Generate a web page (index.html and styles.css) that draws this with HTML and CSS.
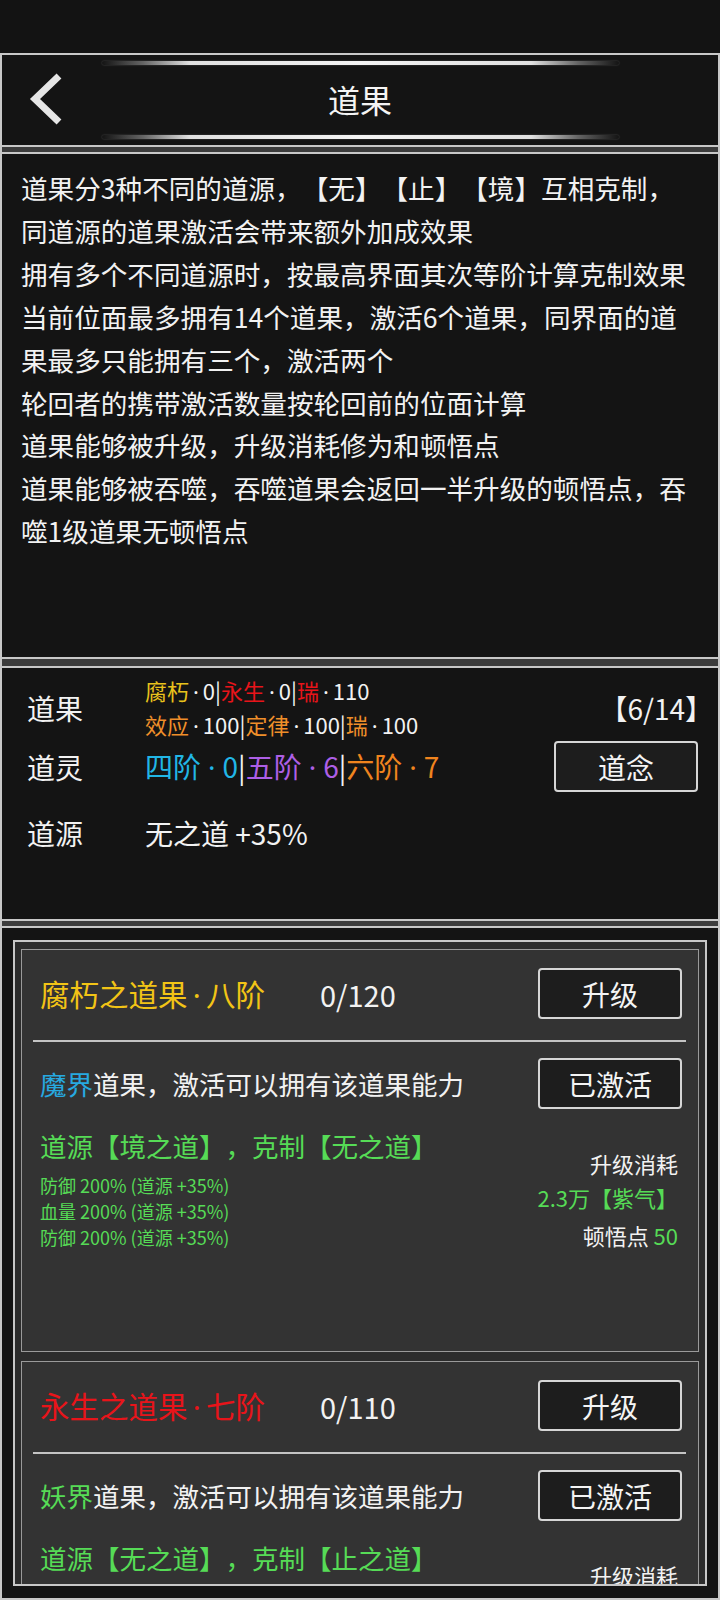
FILE: index.html
```html
<!DOCTYPE html>
<html lang="zh-CN">
<head>
<meta charset="utf-8">
<title>道果</title>
<link rel="stylesheet" href="styles.css">
</head>
<body>
<div class="topbar"></div>
<div class="screen">
  <header class="panel header">
    <div class="glow"></div>
    <div class="nav">
      <div class="back">
        <svg width="40" height="56" viewBox="0 0 40 56"><polyline points="33,5 9,28 33,51" fill="none" stroke="#e6e6e6" stroke-width="7" stroke-linejoin="miter" stroke-miterlimit="10"/></svg>
      </div>
      <h1 class="title">道果</h1>
      <div></div>
    </div>
    <div class="glow"></div>
  </header>

  <section class="panel desc">
    <p>道果分3种不同的道源，【无】【止】【境】互相克制，</p>
    <p>同道源的道果激活会带来额外加成效果</p>
    <p>拥有多个不同道源时，按最高界面其次等阶计算克制效果</p>
    <p>当前位面最多拥有14个道果，激活6个道果，同界面的道</p>
    <p>果最多只能拥有三个，激活两个</p>
    <p>轮回者的携带激活数量按轮回前的位面计算</p>
    <p>道果能够被升级，升级消耗修为和顿悟点</p>
    <p>道果能够被吞噬，吞噬道果会返回一半升级的顿悟点，吞</p>
    <p>噬1级道果无顿悟点</p>
  </section>

  <section class="panel stats">
    <div class="stat-row row-fruit">
      <div class="label">道果</div>
      <div class="multi">
        <div><span class="yellow">腐朽</span><span class="dot">·</span>0|<span class="red">永生</span><span class="dot">·</span>0|<span class="red">瑞</span><span class="dot">·</span>110</div>
        <div><span class="orange">效应</span><span class="dot">·</span>100|<span class="orange">定律</span><span class="dot">·</span>100|<span class="orange">瑞</span><span class="dot">·</span>100</div>
      </div>
      <div class="count">【6/14】</div>
    </div>
    <div class="stat-row row-spirit">
      <div class="label">道灵</div>
      <div class="tiers"><span class="cyan">四阶<span class="dot">·</span>0</span>|<span class="purple">五阶<span class="dot">·</span>6</span>|<span class="orange2">六阶<span class="dot">·</span>7</span></div>
      <div class="btn">道念</div>
    </div>
    <div class="stat-row row-source">
      <div class="label">道源</div>
      <div class="value">无之道 +35%</div>
    </div>
  </section>

  <section class="panel list">
    <div class="frame">
      <div class="card">
        <div class="card-head">
          <div class="card-title gold">腐朽之道果<span class="dot">·</span>八阶</div>
          <div class="card-num">0/120</div>
          <div class="btn">升级</div>
        </div>
        <div class="divider"></div>
        <div class="card-row">
          <div class="realm"><span class="blue">魔界</span>道果，激活可以拥有该道果能力</div>
          <div class="btn">已激活</div>
        </div>
        <div class="card-body">
          <div class="effects">
            <div class="source green">道源【境之道】，克制【无之道】</div>
            <div class="small green">防御 200% (道源 +35%)</div>
            <div class="small green">血量 200% (道源 +35%)</div>
            <div class="small green">防御 200% (道源 +35%)</div>
          </div>
          <div class="cost">
            <div class="cost-title">升级消耗</div>
            <div class="cost-main green">2.3万【紫气】</div>
            <div class="cost-pts">顿悟点 <span class="green">50</span></div>
          </div>
        </div>
      </div>

      <div class="card">
        <div class="card-head">
          <div class="card-title red">永生之道果<span class="dot">·</span>七阶</div>
          <div class="card-num">0/110</div>
          <div class="btn">升级</div>
        </div>
        <div class="divider"></div>
        <div class="card-row">
          <div class="realm"><span class="green">妖界</span>道果，激活可以拥有该道果能力</div>
          <div class="btn">已激活</div>
        </div>
        <div class="card-body">
          <div class="effects">
            <div class="source green">道源【无之道】，克制【止之道】</div>
          </div>
          <div class="cost">
            <div class="cost-title">升级消耗</div>
          </div>
        </div>
      </div>
    </div>
  </section>
</div>
</body>
</html>
```

FILE: styles.css
```css
* { box-sizing: border-box; }

html, body {
  margin: 0;
  padding: 0;
}

body {
  width: 720px;
  height: 1600px;
  background: #141414;
  color: #f2f2f2;
  font-family: "Noto Sans CJK SC", "Noto Sans", sans-serif;
  text-spacing-trim: space-all;
  overflow: hidden;
}

.topbar {
  height: 53px;
  background: #131313;
}

.screen {
  height: 1547px;
  display: flex;
  flex-direction: column;
  background: #3c3c3c;
  border-left: 2px solid #c8c8c8;
  border-right: 2px solid #c8c8c8;
}

.panel {
  flex-shrink: 0;
  background: #141414;
  border-top: 2px solid #c8c8c8;
  border-bottom: 2px solid #c8c8c8;
}

.dot {
  font-family: "Noto Sans", sans-serif;
  padding: 0 0.18em;
}

/* header */
.header {
  height: 94px;
  display: flex;
  flex-direction: column;
  align-items: center;
}

.glow {
  width: 517px;
  height: 4px;
  margin-top: 6px;
  border-radius: 2px;
  background: linear-gradient(90deg, rgba(255,255,255,0) 0%, rgba(255,255,255,0.35) 8%, rgba(235,235,235,0.95) 17%, #f4f4f4 50%, rgba(235,235,235,0.95) 83%, rgba(255,255,255,0.35) 92%, rgba(255,255,255,0) 100%);
  box-shadow: 0 0 2px rgba(255,255,255,0.25);
}

.glow + .nav + .glow { margin-top: 2px; }

.nav {
  width: 100%;
  height: 68px;
  display: grid;
  grid-template-columns: 110px 1fr 110px;
  align-items: center;
}

.back {
  padding-left: 24px;
  height: 56px;
}

.back svg { display: block; }

.title {
  margin: 0;
  text-align: center;
  font-size: 32px;
  font-weight: 400;
  line-height: 40px;
  color: #f4f4f4;
}

/* description */
.desc {
  height: 507px;
  margin-top: 5px;
  padding: 13px 10px 0 19px;
}

.desc p {
  margin: 0;
  font-size: 26.6px;
  line-height: 42.9px;
  white-space: nowrap;
  color: #f2f2f2;
}

/* stats */
.stats {
  height: 255px;
  margin-top: 7px;
  padding: 7px 20px 0 25px;
}

.stat-row {
  display: flex;
  align-items: center;
}

.label {
  width: 118px;
  flex: none;
  font-size: 28px;
  line-height: 36px;
}

.row-fruit { height: 66px; }

.multi {
  font-size: 22px;
  line-height: 33px;
  white-space: nowrap;
}

.count {
  margin-left: auto;
  margin-right: -15px;
  font-size: 28px;
  line-height: 36px;
}

.row-spirit { height: 51px; }

.tiers {
  font-size: 28px;
  line-height: 36px;
  white-space: nowrap;
}

.tiers .dot { padding: 0 0.25em; }

.row-spirit .btn { margin-left: auto; }

.row-source {
  height: 40px;
  margin-top: 21px;
}

.value {
  font-size: 28px;
  line-height: 40px;
}

/* buttons */
.btn {
  width: 144px;
  height: 51px;
  flex: none;
  display: flex;
  align-items: center;
  justify-content: center;
  background: #1d1d1d;
  border: 2px solid #d6d6d6;
  border-radius: 4px;
  font-size: 28px;
  color: #f4f4f4;
}

/* list */
.list {
  flex: 1 1 0;
  min-height: 0;
  margin-top: 5px;
  padding: 12px 11px;
  display: flex;
  flex-direction: column;
}

.frame {
  flex: 1 1 0;
  min-height: 0;
  overflow: hidden;
  background: #2c2c2c;
  border: 2px solid #c8c8c8;
  padding: 7px 6px 0 6px;
  display: flex;
  flex-direction: column;
  gap: 9px;
}

.card {
  height: 403px;
  flex: none;
  background: #333333;
  border: 1px solid #9a9a9a;
  padding: 18px 16px 0 18px;
}

.card-head {
  height: 51px;
  display: flex;
  align-items: center;
}

.card-title {
  width: 280px;
  font-size: 29.5px;
  line-height: 40px;
  white-space: nowrap;
}

.card-num {
  font-size: 29px;
  line-height: 40px;
  color: #f2f2f2;
}

.card-head .btn { margin-left: auto; }

.divider {
  height: 2px;
  margin: 21px -4px 0 -7px;
  background: #c4c4c4;
}

.card-row {
  height: 51px;
  margin-top: 16px;
  display: flex;
  align-items: center;
}

.realm {
  font-size: 26.5px;
  line-height: 36px;
  white-space: nowrap;
}

.card-row .btn { margin-left: auto; }

.card-body {
  display: flex;
  justify-content: space-between;
}

.source {
  margin-top: 20px;
  font-size: 26.5px;
  line-height: 34px;
  white-space: nowrap;
}

.source + .small { margin-top: 9px; }

.small {
  font-size: 18px;
  line-height: 26px;
  white-space: nowrap;
}

.cost {
  margin-top: 39px;
  margin-right: 4px;
  text-align: right;
  font-size: 22px;
  white-space: nowrap;
}

.cost-title { line-height: 30px; }
.cost-main { line-height: 38px; }
.cost-pts { line-height: 38px; }

/* colours */
.yellow { color: #e9c21c; }
.gold { color: #f2c416; }
.red { color: #e8141a; }
.orange { color: #ef8f2a; }
.orange2 { color: #f0841e; }
.cyan { color: #21b6e6; }
.purple { color: #ad5fe6; }
.blue { color: #27a9e0; }
.green { color: #56db56; }
```
